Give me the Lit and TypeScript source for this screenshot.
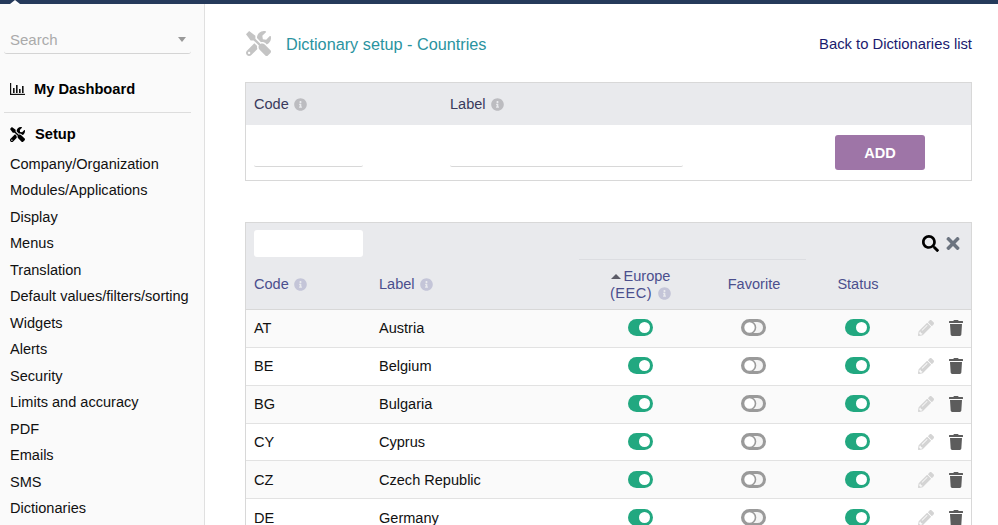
/**
 * Dictionary setup page with sidebar menu
 */

import { LitElement, css, html, svg } from "lit";
import { customElement } from "lit/decorators.js";

const TOOLS = "M501.1 395.7L384 278.6c-23.1-23.1-57.6-27.6-85.4-13.9L192 158.1V96L64 0 0 64l96 128h62.1l106.6 106.6c-13.6 27.8-9.2 62.3 13.9 85.4l117.1 117.1c14.6 14.6 38.2 14.6 52.7 0l52.7-52.7c14.5-14.6 14.5-38.2-.1-52.7zM331.7 225c28.3 0 54.9 11 74.9 31l19.4 19.4c15.8-6.9 30.8-16.5 43.8-29.5 37.1-37.1 49.7-89.3 37.9-136.7-2.2-9-13.5-12.1-20.1-5.5l-74.4 74.4-67.9-11.3L334 98.9l74.4-74.4c6.6-6.6 3.4-17.9-5.7-20.2-47.4-11.7-99.6.9-136.6 37.9-28.5 28.5-41.9 66.1-41.2 103.6l82.1 82.1c8.1-1.9 16.5-2.9 24.7-2.9zm-103.9 82l-56.7-56.7L18.7 402.8c-25 25-25 65.5 0 90.5s65.5 25 90.5 0l123.6-123.6c-7.6-19.9-9.9-41.6-5-62.7zM64 472c-13.2 0-24-10.8-24-24 0-13.3 10.7-24 24-24s24 10.7 24 24c0 13.2-10.7 24-24 24z";
const SEARCH = "M505 442.7L405.3 343c-4.5-4.5-10.6-7-17-7H372c27.6-35.3 44-79.7 44-128C416 93.1 322.9 0 208 0S0 93.1 0 208s93.1 208 208 208c48.3 0 92.7-16.4 128-44v16.3c0 6.4 2.5 12.5 7 17l99.7 99.7c9.4 9.4 24.6 9.4 33.9 0l28.3-28.3c9.4-9.4 9.4-24.6.1-34zM208 336c-70.7 0-128-57.2-128-128 0-70.7 57.2-128 128-128 70.7 0 128 57.2 128 128 0 70.7-57.2 128-128 128z";
const TIMES = "M242.72 256l100.07-100.07c12.28-12.28 12.28-32.19 0-44.48l-22.24-22.24c-12.28-12.28-32.19-12.28-44.48 0L176 189.28 75.93 89.21c-12.28-12.28-32.19-12.28-44.48 0L9.21 111.45c-12.28 12.28-12.28 32.19 0 44.48L109.28 256 9.21 356.07c-12.28 12.28-12.28 32.19 0 44.48l22.24 22.24c12.28 12.28 32.2 12.28 44.48 0L176 322.72l100.07 100.07c12.28 12.28 32.2 12.28 44.48 0l22.24-22.24c12.28-12.28 12.28-32.19 0-44.48L242.72 256z";
const PENCIL = "M497.9 142.1l-46.1 46.1c-4.7 4.7-12.3 4.7-17 0l-111-111c-4.7-4.7-4.7-12.3 0-17l46.1-46.1c18.7-18.7 49.1-18.7 67.9 0l60.1 60.1c18.8 18.7 18.8 49.1 0 67.9zM284.2 99.8L21.6 362.4.4 483.9c-2.9 16.4 11.4 30.6 27.8 27.8l121.5-21.3 262.6-262.6c4.7-4.7 4.7-12.3 0-17l-111-111c-4.8-4.7-12.4-4.7-17.1 0zM124.1 339.9c-5.5-5.5-5.5-14.3 0-19.8l154-154c5.5-5.5 14.3-5.5 19.8 0s5.5 14.3 0 19.8l-154 154c-5.5 5.5-14.3 5.5-19.8 0zM88 424h48v36.3l-64.5 11.3-31.1-31.1L51.7 376H88v48z";
const TRASH = "M432 32H312l-9.4-18.7A24 24 0 0 0 281.1 0H166.8a23.72 23.72 0 0 0-21.4 13.3L136 32H16A16 16 0 0 0 0 48v32a16 16 0 0 0 16 16h416a16 16 0 0 0 16-16V48a16 16 0 0 0-16-16zM53.2 467a48 48 0 0 0 47.9 45h245.8a48 48 0 0 0 47.9-45L416 128H32z";
const INFO = "M256 8C119.043 8 8 119.083 8 256c0 136.997 111.043 248 248 248s248-111.003 248-248C504 119.083 392.957 8 256 8zm0 110c23.196 0 42 18.804 42 42s-18.804 42-42 42-42-18.804-42-42 18.804-42 42-42zm56 254c0 6.627-5.373 12-12 12h-88c-6.627 0-12-5.373-12-12v-24c0-6.627 5.373-12 12-12h12v-64h-12c-6.627 0-12-5.373-12-12v-24c0-6.627 5.373-12 12-12h64c6.627 0 12 5.373 12 12v100h12c6.627 0 12 5.373 12 12v24z";

const MENU = [
  "Company/Organization",
  "Modules/Applications",
  "Display",
  "Menus",
  "Translation",
  "Default values/filters/sorting",
  "Widgets",
  "Alerts",
  "Security",
  "Limits and accuracy",
  "PDF",
  "Emails",
  "SMS",
  "Dictionaries",
];

const COUNTRIES = [
  ["AT", "Austria"],
  ["BE", "Belgium"],
  ["BG", "Bulgaria"],
  ["CY", "Cyprus"],
  ["CZ", "Czech Republic"],
  ["DE", "Germany"],
];

const icon = (d: string, cls: string, box = "0 0 512 512") => html`
  <svg class=${cls} viewBox=${box} aria-hidden="true">${svg`<path d=${d}></path>`}</svg>
`;

const info = () => icon(INFO, "info");

const toggleOn = () => html`
  <svg class="toggle" viewBox="0 0 25 17" aria-hidden="true">
    <rect width="25" height="17" rx="8.5" fill="#22a880"></rect>
    <circle cx="16.5" cy="8.5" r="5.5" fill="#fff"></circle>
  </svg>
`;

const toggleOff = () => html`
  <svg class="toggle" viewBox="0 0 25 17" aria-hidden="true">
    <rect x="1.5" y="1.5" width="22" height="14" rx="7" fill="#f4f4f4" stroke="#9a9a9a" stroke-width="3"></rect>
    <circle cx="8.5" cy="8.5" r="6" fill="#fff" stroke="#9a9a9a" stroke-width="1.6"></circle>
  </svg>
`;

@customElement("app-root")
export class AppRoot extends LitElement {
  static styles = css`
    :host {
      display: block;
      height: 100vh;
      overflow: hidden;
      background: #fff;
      color: #111;
      font-family: "Liberation Sans", Arial, sans-serif;
      font-size: 14.55px;
    }

    .topbar {
      position: relative;
      height: 4px;
      background: #253a5b;
    }

    .notch {
      position: absolute;
      left: 10px;
      top: 0;
      width: 0;
      height: 0;
      border-left: 5px solid transparent;
      border-right: 5px solid transparent;
      border-bottom: 4px solid #fff;
    }

    .page {
      display: flex;
      height: calc(100% - 4px);
    }

    .sidebar {
      flex: none;
      box-sizing: border-box;
      width: 205px;
      padding: 24px 13px 0 4px;
      background: #fafafa;
      border-right: 1px solid #e0e0e0;
    }

    .search {
      display: flex;
      align-items: center;
      justify-content: space-between;
      box-sizing: border-box;
      height: 26px;
      padding: 0 5px 3px 6px;
      border-bottom: 1px solid #d4d4d4;
      border-radius: 0 0 3px 3px;
      color: #aaa;
      font-size: 15px;
    }

    .caret {
      width: 0;
      height: 0;
      border-left: 4px solid transparent;
      border-right: 4px solid transparent;
      border-top: 5px solid #999;
    }

    .section {
      display: flex;
      align-items: center;
      gap: 9px;
      padding-left: 6px;
      font-weight: 700;
      font-size: 14.7px;
      color: #000;
    }

    .dash {
      height: 59px;
      box-sizing: border-box;
      padding-top: 11px;
      border-bottom: 1px solid #ddd;
    }

    .setup {
      height: 42px;
      box-sizing: border-box;
      gap: 10px;
    }

    .chart {
      flex: none;
      width: 15px;
      height: 12px;
      fill: #111;
    }

    .wrench {
      flex: none;
      width: 15px;
      height: 15px;
      fill: #000;
    }

    .menu {
      margin: -4.5px 0 0;
      padding: 0 0 0 6px;
      list-style: none;
    }

    .menu li {
      height: 26.5px;
      line-height: 26.5px;
      white-space: nowrap;
    }

    .main {
      flex: 1;
      min-width: 0;
      padding: 0 26px 0 40px;
    }

    .title-row {
      display: flex;
      align-items: center;
      height: 78px;
    }

    .title-icon {
      flex: none;
      width: 25px;
      height: 25px;
      margin: 1px 15px 0 1px;
      fill: #c4c4c4;
    }

    .title {
      flex: 1;
      padding-top: 2px;
      font-size: 16.25px;
      color: #2a93a0;
    }

    .back {
      padding-top: 2px;
      color: #1a1a6e;
      font-size: 14.8px;
      text-decoration: none;
    }

    .card {
      border: 1px solid #d8d8d8;
      background: #fff;
    }

    .form-head {
      display: grid;
      grid-template-columns: 196px 1fr;
      align-items: center;
      height: 42px;
      padding-left: 8px;
      background: #e9eaed;
      color: #3a3a5c;
    }

    .form-body {
      display: grid;
      grid-template-columns: 196px 233px 1fr;
      height: 55px;
      padding-left: 8px;
    }

    .field {
      box-sizing: border-box;
      height: 42px;
      border-bottom: 1px solid #d8d8d8;
      border-radius: 0 0 2px 2px;
    }

    .code-field {
      width: 109px;
    }

    .add {
      justify-self: end;
      width: 90px;
      height: 35px;
      margin: 10px 46px 0 0;
      padding: 0;
      border: 0;
      border-radius: 3px;
      background: #9e75a7;
      color: #fff;
      font: 700 14.55px "Liberation Sans", Arial, sans-serif;
    }

    .list {
      margin-top: 41px;
    }

    .toolbar {
      display: flex;
      align-items: center;
      height: 36px;
      padding: 0 11px 0 8px;
      background: #e9eaed;
    }

    .filter {
      width: 109px;
      height: 27px;
      margin-top: 5px;
      border-radius: 3px;
      background: #fff;
    }

    .tool-search {
      width: 17px;
      height: 17px;
      margin: 5px 7px 0 auto;
      fill: #000;
    }

    .tool-close {
      width: 14px;
      height: 19px;
      margin-top: 5px;
      fill: #6c7480;
    }

    .row {
      display: grid;
      grid-template-columns: 125px 208px 123px 104px 104px 1fr;
      align-items: center;
    }

    .head {
      height: 50px;
      background: #e9eaed;
      border-bottom: 1px solid #d8d8d8;
      color: #4b4f8d;
    }

    .body-row {
      height: 37.85px;
      box-sizing: border-box;
      border-bottom: 1px solid #e2e2e2;
    }

    .body-row:nth-child(odd) {
      background: #fafafa;
    }

    .cell {
      padding-left: 8px;
    }

    .center {
      padding: 0;
      text-align: center;
      line-height: 17px;
    }

    .ruled {
      align-self: stretch;
      display: flex;
      align-items: center;
      justify-content: center;
      border-top: 1px solid #dcdde1;
    }

    .eec {
      letter-spacing: 0.5px;
    }

    .sort {
      display: inline-block;
      width: 0;
      height: 0;
      margin-right: 3px;
      vertical-align: 2px;
      border-left: 5px solid transparent;
      border-right: 5px solid transparent;
      border-bottom: 5px solid #5c5c68;
    }

    .info {
      width: 13px;
      height: 13px;
      margin-left: 1.5px;
      vertical-align: -2px;
      fill: #bcbcc0;
    }

    .head .info {
      fill: #c4c5d8;
    }

    .toggle {
      display: block;
      width: 25px;
      height: 17px;
      margin: -1px 0 0 39px;
    }

    .toggle-wide .toggle {
      margin-left: 49px;
    }

    .actions {
      display: flex;
      align-items: center;
      gap: 15px;
      padding-left: 8px;
    }

    .pencil {
      width: 16px;
      height: 16px;
      fill: #d4d4d4;
    }

    .trash {
      width: 14px;
      height: 16px;
      fill: #5c5c5c;
    }
  `;

  render() {
    return html`
      <div class="topbar"><span class="notch"></span></div>
      <div class="page">
        <aside class="sidebar">
          <div class="search"><span>Search</span><span class="caret"></span></div>
          <div class="section dash">
            <svg class="chart" viewBox="0 0 15 12" aria-hidden="true">
              <rect x="0" y="0" width="1.2" height="12"></rect>
              <rect x="0" y="10.8" width="15" height="1.2"></rect>
              <rect x="3" y="5" width="1.6" height="5"></rect>
              <rect x="6" y="2" width="1.6" height="8"></rect>
              <rect x="9" y="6" width="1.6" height="4"></rect>
              <rect x="12" y="3" width="1.6" height="7"></rect>
            </svg>
            My Dashboard
          </div>
          <div class="section setup">${icon(TOOLS, "wrench")} Setup</div>
          <ul class="menu">
            ${MENU.map((item) => html`<li>${item}</li>`)}
          </ul>
        </aside>
        <main class="main">
          <div class="title-row">
            ${icon(TOOLS, "title-icon")}
            <span class="title">Dictionary setup - Countries</span>
            <a class="back" href="#">Back to Dictionaries list</a>
          </div>
          <section class="card">
            <div class="form-head">
              <span>Code ${info()}</span>
              <span>Label ${info()}</span>
            </div>
            <div class="form-body">
              <div class="field code-field"></div>
              <div class="field"></div>
              <button class="add">ADD</button>
            </div>
          </section>
          <section class="card list">
            <div class="toolbar">
              <div class="filter"></div>
              ${icon(SEARCH, "tool-search")}
              ${icon(TIMES, "tool-close", "0 0 352 512")}
            </div>
            <div class="row head">
              <div class="cell">Code ${info()}</div>
              <div class="cell">Label ${info()}</div>
              <div class="center ruled">
                <div><span class="sort"></span>Europe<br /><span class="eec">(EEC) </span>${info()}</div>
              </div>
              <div class="center ruled">Favorite</div>
              <div class="center">Status</div>
              <div></div>
            </div>
            <div>
              ${COUNTRIES.map(
                ([code, label]) => html`
                  <div class="row body-row">
                    <div class="cell">${code}</div>
                    <div class="cell">${label}</div>
                    <div class="toggle-wide">${toggleOn()}</div>
                    <div>${toggleOff()}</div>
                    <div>${toggleOn()}</div>
                    <div class="actions">
                      ${icon(PENCIL, "pencil")}
                      ${icon(TRASH, "trash", "0 0 448 512")}
                    </div>
                  </div>
                `
              )}
            </div>
          </section>
        </main>
      </div>
    `;
  }
}

declare global {
  interface HTMLElementTagNameMap {
    "app-root": AppRoot;
  }
}
